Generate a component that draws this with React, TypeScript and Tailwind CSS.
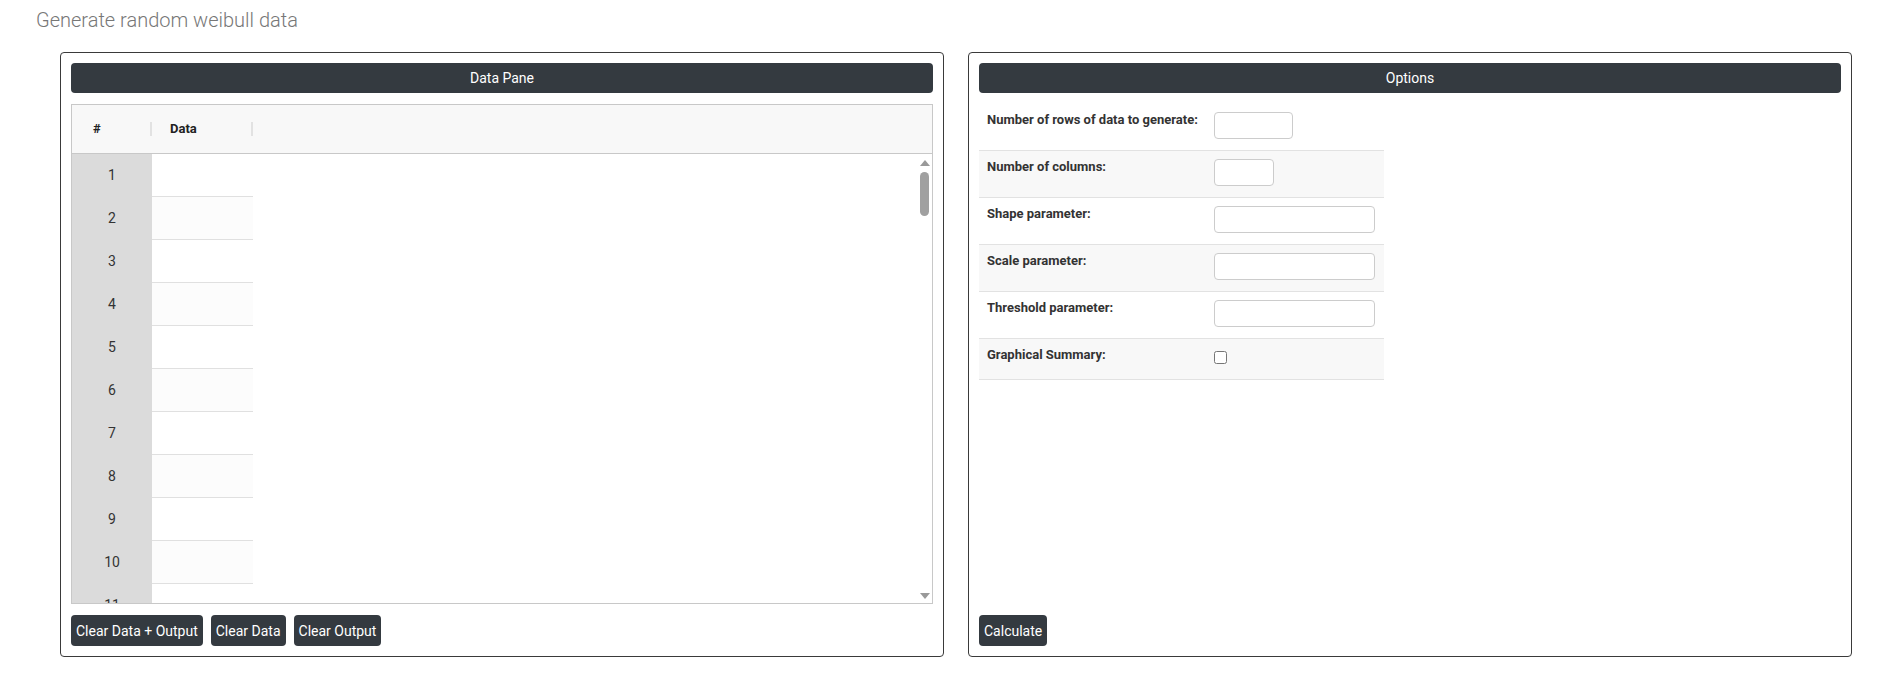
import React from "react";

const rowNumbers = Array.from({ length: 11 }, (_, i) => i + 1);

interface OptionRow {
  label: string;
  kind: "input" | "checkbox";
  width?: string;
}

const options: OptionRow[] = [
  { label: "Number of rows of data to generate:", kind: "input", width: "w-[79px]" },
  { label: "Number of columns:", kind: "input", width: "w-[60px]" },
  { label: "Shape parameter:", kind: "input", width: "w-[161px]" },
  { label: "Scale parameter:", kind: "input", width: "w-[161px]" },
  { label: "Threshold parameter:", kind: "input", width: "w-[161px]" },
  { label: "Graphical Summary:", kind: "checkbox" },
];

const PaneHeader: React.FC<{ title: string }> = ({ title }) => (
  <div className="h-[30px] shrink-0 rounded-[4px] bg-[#343a40] text-white text-[14px] flex items-center justify-center">
    {title}
  </div>
);

const DarkButton: React.FC<{ label: string }> = ({ label }) => (
  <button className="h-[31px] px-[5px] rounded-[4px] bg-[#343a40] text-white text-[14px] leading-none">
    {label}
  </button>
);

const DataGrid: React.FC = () => (
  <div className="mt-[11px] h-[500px] border border-[#c8c8c8] flex flex-col">
    <div className="h-[49px] shrink-0 bg-[#f8f8f8] border-b border-[#c8c8c8] flex items-center text-[13px] font-bold text-[#222]">
      <div className="w-[80px] flex items-center">
        <span className="flex-1 pl-[21px]">#</span>
        <span className="w-[2px] h-[14px] bg-[#e2e2e2]" />
      </div>
      <div className="w-[101px] flex items-center">
        <span className="flex-1 pl-[18px]">Data</span>
        <span className="w-[2px] h-[14px] bg-[#e2e2e2]" />
      </div>
    </div>
    <div className="flex-1 flex min-h-0">
      <div className="flex-1 overflow-hidden">
        {rowNumbers.map((n) => (
          <div key={n} className="h-[43px] flex">
            <div className="w-[80px] bg-[#dbdbdb] flex items-center justify-center text-[14px] text-[#333]">
              {n}
            </div>
            <div
              className={`w-[101px] border-b border-[#e0e0e0] ${
                n % 2 === 0 ? "bg-[#fcfcfc]" : "bg-white"
              }`}
            />
          </div>
        ))}
      </div>
      <div className="w-[15px] flex flex-col items-center pt-[6px] pb-[4px]">
        <div className="w-0 h-0 border-l-[5px] border-r-[5px] border-b-[6px] border-l-transparent border-r-transparent border-b-[#999]" />
        <div className="mt-[6px] w-[9px] h-[44px] rounded-full bg-[#a0a0a0]" />
        <div className="flex-1" />
        <div className="w-0 h-0 border-l-[5px] border-r-[5px] border-t-[6px] border-l-transparent border-r-transparent border-t-[#999]" />
      </div>
    </div>
  </div>
);

const OptionsTable: React.FC = () => (
  <div className="mt-[11px] w-[405px]">
    {options.map((opt, i) => (
      <div
        key={opt.label}
        className={`flex border-b border-[#e2e2e2] ${
          opt.kind === "checkbox" ? "h-[41px]" : "h-[47px]"
        } ${i % 2 === 1 ? "bg-[#f8f8f8]" : "bg-white"}`}
      >
        <div className="w-[235px] pl-[8px] pt-[8px] text-[13px] leading-[16px] font-bold text-[#333]">
          {opt.label}
        </div>
        <div className="flex-1 pt-[8px]">
          {opt.kind === "input" ? (
            <input
              type="text"
              className={`${opt.width} h-[27px] bg-white border border-[#cccccc] rounded-[4px] outline-none`}
            />
          ) : (
            <input type="checkbox" className="mt-[2px] w-[13px] h-[13px]" />
          )}
        </div>
      </div>
    ))}
  </div>
);

export default function App() {
  return (
    <div className="font-['Roboto',sans-serif] bg-white min-h-[676px]">
      <p className="pl-[36px] pt-[6px] text-[20px] leading-[28px] font-light text-[#777]">
        Generate random weibull data
      </p>
      <div className="mt-[18px] pl-[60px] pr-[25px] grid grid-cols-2 gap-[24px]">
        <div className="h-[605px] border border-[#3a3a3a] rounded-[4px] p-[10px] flex flex-col">
          <PaneHeader title="Data Pane" />
          <DataGrid />
          <div className="mt-[11px] flex gap-[8px]">
            <DarkButton label="Clear Data + Output" />
            <DarkButton label="Clear Data" />
            <DarkButton label="Clear Output" />
          </div>
        </div>
        <div className="h-[605px] border border-[#3a3a3a] rounded-[4px] p-[10px] flex flex-col">
          <PaneHeader title="Options" />
          <OptionsTable />
          <div className="mt-auto flex">
            <DarkButton label="Calculate" />
          </div>
        </div>
      </div>
    </div>
  );
}
